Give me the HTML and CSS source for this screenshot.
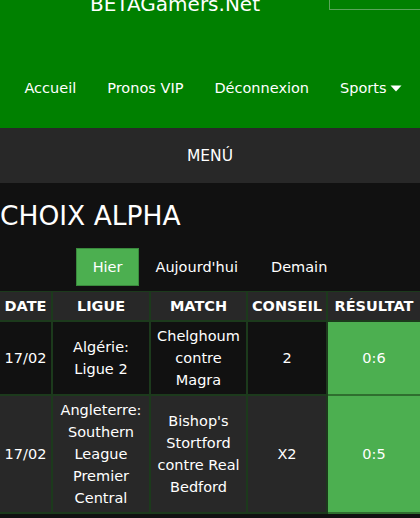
FILE: index.html
```html
<!DOCTYPE html>
<html lang="fr">
<head>
<meta charset="utf-8">
<title>CHOIX ALPHA</title>
<link rel="stylesheet" href="styles.css">
</head>
<body>
<header class="top">
  <div class="brand-row">
    <div class="brand">BETAGamers.Net</div>
    <div class="search"></div>
  </div>
  <nav class="nav">
    <a class="nav-item">Accueil</a>
    <a class="nav-item">Pronos VIP</a>
    <a class="nav-item">Déconnexion</a>
    <a class="nav-item">Sports <svg class="caret" width="12" height="7" viewBox="0 0 12 7"><path d="M0.5 0.5h11L6 6.5z" fill="#fff"/></svg></a>
  </nav>
</header>
<div class="menu-bar">MENÚ</div>
<main class="content">
  <h1 class="title">CHOIX ALPHA</h1>
  <div class="tabs">
    <span class="tab active">Hier</span>
    <span class="tab">Aujourd'hui</span>
    <span class="tab">Demain</span>
  </div>
  <table class="picks">
    <colgroup>
      <col class="c-date"><col class="c-ligue"><col class="c-match"><col class="c-conseil"><col class="c-res">
    </colgroup>
    <thead>
      <tr><th>DATE</th><th>LIGUE</th><th>MATCH</th><th>CONSEIL</th><th>RÉSULTAT</th></tr>
    </thead>
    <tbody>
      <tr class="row-odd"><td>17/02</td><td>Algérie: Ligue 2</td><td>Chelghoum contre Magra</td><td>2</td><td class="win">0:6</td></tr>
      <tr class="row-even"><td>17/02</td><td>Angleterre: Southern League Premier Central</td><td>Bishop's Stortford contre Real Bedford</td><td>X2</td><td class="win">0:5</td></tr>
    </tbody>
  </table>
</main>
</body>
</html>
```
FILE: styles.css
```css
* { box-sizing: border-box; }
html, body { margin: 0; padding: 0; }
body {
  background: #111111;
  color: #ffffff;
  font-family: "DejaVu Sans", Verdana, sans-serif;
  font-size: 14.5px;
  overflow: hidden;
}
.top {
  background: #008000;
  height: 128px;
}
.brand-row {
  display: flex;
  height: 10px;
}
.brand {
  margin-top: -8px;
  padding-left: 90px;
  font-size: 20px;
  line-height: 24px;
  white-space: nowrap;
}
.search {
  margin-left: auto;
  margin-top: -20px;
  width: 91px;
  height: 30px;
  border-left: 1px solid #5aa55a;
  border-bottom: 1px solid #5aa55a;
}
.nav {
  display: flex;
  justify-content: center;
  margin-top: 67px;
  padding-left: 6px;
}
.nav-item {
  padding: 0 15.5px;
  line-height: 22px;
  white-space: nowrap;
  display: flex;
  align-items: center;
}
.caret { margin-left: 3px; margin-top: 1px; }
.menu-bar {
  background: #282828;
  height: 55px;
  display: flex;
  align-items: center;
  justify-content: center;
  font-size: 15.5px;
}
.content { padding-top: 17px; }
.title {
  margin: 0;
  font-weight: normal;
  font-size: 26.5px;
  line-height: 32px;
}
.tabs {
  display: flex;
  justify-content: center;
  margin-top: 16px;
}
.tab {
  padding: 7px 15.5px;
  line-height: 22px;
  border: 1px solid transparent;
}
.tab.active {
  background: #4caf50;
  border-color: #3a8a3d;
}
.picks {
  margin-top: 5px;
  width: 420px;
  border-collapse: collapse;
  table-layout: fixed;
  text-align: center;
  line-height: 22px;
}
.c-date { width: 52px; }
.c-ligue { width: 98px; }
.c-match { width: 97px; }
.c-conseil { width: 80px; }
.c-res { width: 93px; }
.picks th, .picks td {
  border: 2px solid #1c3a1c;
  padding: 3px 2px;
}
.picks th {
  background: #282828;
  font-weight: bold;
  white-space: nowrap;
}
.picks tr:first-child th { border-top-width: 1px; }
.row-odd td { background: #111111; }
.row-even td { background: #282828; }
.picks td.win { background: #4caf50; border-color: #2f6f2f; border-left-color: #1c3a1c; }
.picks th:first-child, .picks td:first-child { border-left: 0; }
.picks th:last-child, .picks td:last-child { border-right: 0; }
```
